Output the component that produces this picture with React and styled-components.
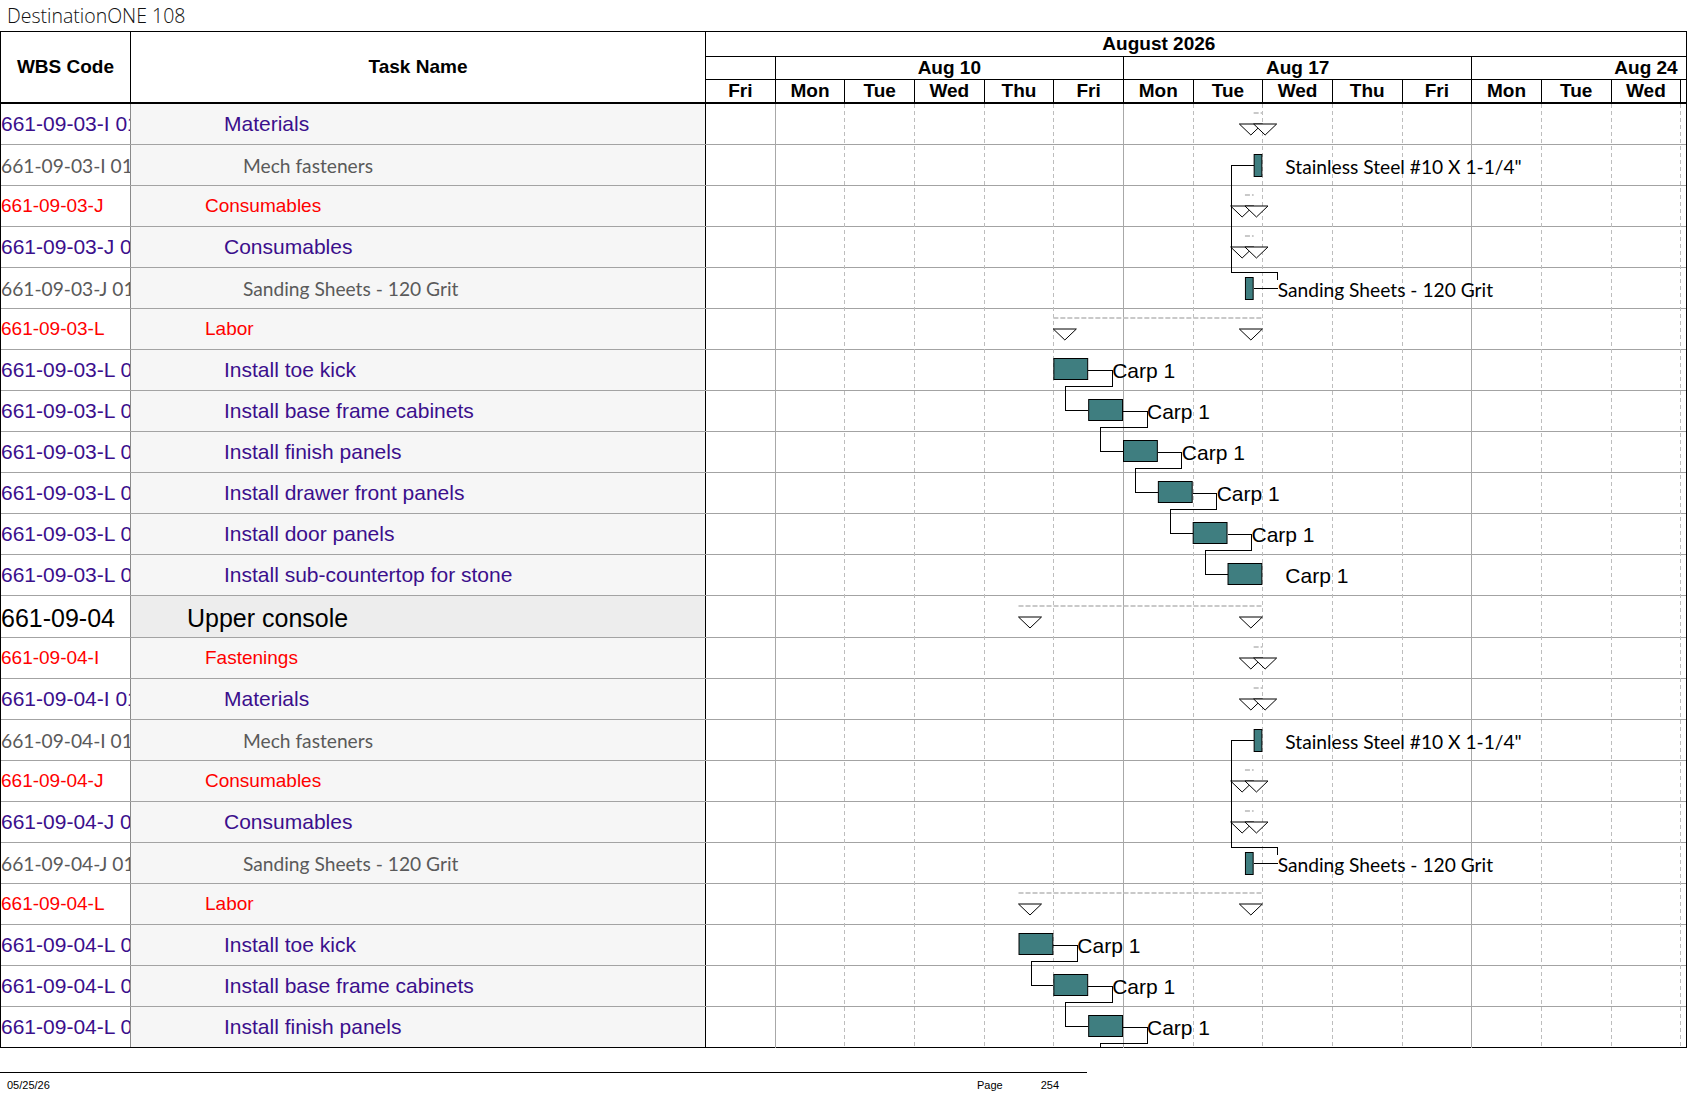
import React from "react";
import styled, { createGlobalStyle, css } from "styled-components";

// timescale: one working day = 69.67px, day 0 = Fri Aug 7 (starts at the task/chart divider)
const DAY = 69.67;
const X0 = 705;
const dx = (d) => X0 + DAY * d;

const BODY_TOP = 104;
const ROW_H = 41;
const BIG_ROW_H = 42;

const MAT = [7.875, 8];
const CON = [7.75, 7.875];
const STEEL = 'Stainless Steel #10 X 1-1/4"';
const SAND = "Sanding Sheets - 120 Grit";

const rows = [
  { code: "661-09-03-I 01", name: "Materials", kind: "l3", sum: MAT },
  { code: "661-09-03-I 01-01", name: "Mech fasteners", kind: "l4", bar: MAT, label: STEEL, mat: true },
  { code: "661-09-03-J", name: "Consumables", kind: "l2", sum: CON },
  { code: "661-09-03-J 01", name: "Consumables", kind: "l3", sum: CON },
  { code: "661-09-03-J 01-01", name: SAND, kind: "l4", bar: CON, label: SAND, mat: true, link: -3 },
  { code: "661-09-03-L", name: "Labor", kind: "l2", sum: [5, 8] },
  { code: "661-09-03-L 01", name: "Install toe kick", kind: "task", bar: [5, 5.5], label: "Carp 1", link: 1 },
  { code: "661-09-03-L 02", name: "Install base frame cabinets", kind: "task", bar: [5.5, 6], label: "Carp 1", link: 1 },
  { code: "661-09-03-L 03", name: "Install finish panels", kind: "task", bar: [6, 6.5], label: "Carp 1", link: 1 },
  { code: "661-09-03-L 04", name: "Install drawer front panels", kind: "task", bar: [6.5, 7], label: "Carp 1", link: 1 },
  { code: "661-09-03-L 05", name: "Install door panels", kind: "task", bar: [7, 7.5], label: "Carp 1", link: 1 },
  { code: "661-09-03-L 06", name: "Install sub-countertop for stone", kind: "task", bar: [7.5, 8], label: "Carp 1" },
  { code: "661-09-04", name: "Upper console", kind: "l1", sum: [4.5, 8] },
  { code: "661-09-04-I", name: "Fastenings", kind: "l2", sum: MAT },
  { code: "661-09-04-I 01", name: "Materials", kind: "l3", sum: MAT },
  { code: "661-09-04-I 01-01", name: "Mech fasteners", kind: "l4", bar: MAT, label: STEEL, mat: true },
  { code: "661-09-04-J", name: "Consumables", kind: "l2", sum: CON },
  { code: "661-09-04-J 01", name: "Consumables", kind: "l3", sum: CON },
  { code: "661-09-04-J 01-01", name: SAND, kind: "l4", bar: CON, label: SAND, mat: true, link: -3 },
  { code: "661-09-04-L", name: "Labor", kind: "l2", sum: [4.5, 8] },
  { code: "661-09-04-L 01", name: "Install toe kick", kind: "task", bar: [4.5, 5], label: "Carp 1", link: 1 },
  { code: "661-09-04-L 02", name: "Install base frame cabinets", kind: "task", bar: [5, 5.5], label: "Carp 1", link: 1 },
  { code: "661-09-04-L 03", name: "Install finish panels", kind: "task", bar: [5.5, 6], label: "Carp 1", link: 1 },
];

// row tops in page coordinates
let acc = BODY_TOP;
const layout = rows.map((r) => {
  const h = r.kind === "l1" ? BIG_ROW_H : ROW_H;
  const top = acc;
  acc += h;
  return { top, h };
});
const BODY_H = acc - BODY_TOP;

const days = ["Fri", "Mon", "Tue", "Wed", "Thu", "Fri", "Mon", "Tue", "Wed", "Thu", "Fri", "Mon", "Tue", "Wed"];
const weeks = [
  { w: DAY, text: "" },
  { w: DAY * 5, text: "Aug 10" },
  { w: DAY * 5, text: "Aug 17" },
  { w: DAY * 5, text: "Aug 24" },
];

const kindStyles = {
  l1: css`
    font-size: 25px;
    color: #000;
    padding-top: 4px;
  `,
  l2: css`
    font-size: 19px;
    color: #f00;
  `,
  l3: css`
    font-size: 21px;
    color: #3b0f8c;
  `,
  task: css`
    font-size: 21px;
    color: #3b0f8c;
  `,
  l4: css`
    font-family: Lato, "Liberation Sans", sans-serif;
    font-size: 19.2px;
    color: #5a5a5a;
  `,
};

const indents = { l1: 56, l2: 74, l3: 93, task: 93, l4: 112 };

const GlobalStyle = createGlobalStyle`
  html, body {
    margin: 0;
    padding: 0;
    background: #fff;
  }
  body {
    font-family: "Liberation Sans", Arial, sans-serif;
    color: #000;
  }
`;

const Page = styled.div`
  width: 1687px;
`;

const Title = styled.div`
  height: 31px;
  padding-left: 7px;
  display: flex;
  align-items: center;
  font-family: "Open Sans", sans-serif;
  font-weight: 300;
  font-size: 19.5px;
  color: #111;
`;

const Sheet = styled.div`
  border: 1px solid #000;
  border-bottom: none;
`;

const Header = styled.div`
  display: flex;
  height: 72px;
  box-sizing: border-box;
  border-bottom: 2px solid #000;
`;

const HeadCell = styled.div`
  flex: none;
  width: ${(p) => p.$w}px;
  box-sizing: border-box;
  border-right: 1px solid #000;
  display: flex;
  align-items: center;
  justify-content: center;
  font-weight: bold;
  font-size: 19px;
`;

const Timescale = styled.div`
  flex: 1;
  min-width: 0;
  display: flex;
  flex-direction: column;
`;

const ScaleRow = styled.div`
  display: flex;
  height: ${(p) => p.$h}px;
  box-sizing: border-box;
  border-bottom: ${(p) => (p.$last ? "none" : "1px solid #000")};
  overflow: hidden;
  flex: ${(p) => (p.$last ? 1 : "none")};
`;

const ScaleCell = styled.div`
  flex: none;
  width: ${(p) => p.$w}px;
  margin-left: ${(p) => p.$offset || 0}px;
  box-sizing: border-box;
  border-right: ${(p) => (p.$open ? "none" : "1px solid #000")};
  display: flex;
  align-items: center;
  justify-content: center;
  font-weight: bold;
  font-size: 19px;
  white-space: nowrap;
`;

const Body = styled.div`
  position: relative;
`;

const Row = styled.div`
  display: flex;
  height: ${(p) => p.$h}px;
  box-sizing: border-box;
  border-bottom: 1px solid #a3a3a3;

  &:last-of-type {
    border-bottom-color: #000;
  }
`;

const CodeCell = styled.div`
  flex: none;
  width: 130px;
  box-sizing: border-box;
  border-right: 1px solid #8a8a8a;
  display: flex;
  align-items: center;
  overflow: hidden;
  white-space: nowrap;
  background: #fff;
  ${(p) => kindStyles[p.$kind]}
`;

const NameCell = styled.div`
  flex: none;
  width: 575px;
  box-sizing: border-box;
  border-right: 1px solid #000;
  padding-left: ${(p) => p.$indent}px;
  display: flex;
  align-items: center;
  overflow: hidden;
  white-space: nowrap;
  background: ${(p) => (p.$kind === "l1" ? "#ededed" : "#f6f6f6")};
  ${(p) => kindStyles[p.$kind]}
`;

const ChartCell = styled.div`
  flex: 1;
`;

const ChartOverlay = styled.svg`
  position: absolute;
  left: 705px;
  top: 0;
  pointer-events: none;
  overflow: hidden;
`;

const Footer = styled.div`
  margin-top: 24px;
  width: 1087px;
  box-sizing: border-box;
  border-top: 1px solid #000;
  padding: 5px 28px 0 7px;
  display: flex;
  align-items: center;
  font-size: 11px;
  line-height: 14px;
`;

const FooterPage = styled.span`
  margin-left: auto;
  margin-right: 38px;
`;

function GridLines() {
  const lines = [];
  for (let k = 1; k <= 14; k++) {
    const x = Math.round(dx(k)) + 0.5;
    const week = k === 1 || k === 6 || k === 11;
    lines.push(
      <line
        key={k}
        x1={x}
        x2={x}
        y1={BODY_TOP}
        y2={BODY_TOP + BODY_H}
        stroke={week ? "#a8a8a8" : "#bdbdbd"}
        strokeWidth="1"
        strokeDasharray={week ? undefined : "4 3"}
      />
    );
  }
  return <g shapeRendering="crispEdges">{lines}</g>;
}

function Summary({ top, h, range }) {
  const s = dx(range[0]);
  const e = dx(range[1]);
  const ty = top + (h > ROW_H ? 21 : 20);
  const dashY = top + (h > ROW_H ? 10 : 9);
  return (
    <g>
      <line x1={s} x2={e} y1={dashY} y2={dashY} stroke="#c9c9c9" strokeWidth="2" strokeDasharray="5 2" />
      <path d={`M${e - 23},${ty} L${e},${ty} L${e - 11.5},${ty + 11} Z`} fill="#fff" stroke="#000" strokeWidth="1" />
      <path d={`M${s},${ty} L${s + 23},${ty} L${s + 11.5},${ty + 11} Z`} fill="#fff" stroke="#000" strokeWidth="1" />
    </g>
  );
}

function linkPath(i) {
  const r = rows[i];
  const { top, h } = layout[i];
  const s = dx(r.bar[0]);
  const e = dx(r.bar[1]);
  const cy = Math.round(top + 20) + 0.5;
  const lx = e + 24;
  const j = i + r.link;
  if (r.link > 0) {
    const next = rows[j];
    const nTop = next ? layout[j].top : top + h;
    const nCy = Math.round(nTop + 19) + 0.5;
    const ns = next ? dx(next.bar[0]) : s + DAY / 2;
    const endY = next ? nCy : nTop + 40;
    return `M${e},${cy} H${lx} V${top + h - 4.5} H${Math.round(s + 12) + 0.5} V${endY} ${next ? `H${ns}` : ""}`;
  }
  const t = layout[j];
  const tCy = Math.round(t.top + 20) + 0.5;
  return `M${e},${cy} H${lx} M${lx},${top + 12} V${top + 4.5} H${Math.round(s - 14) + 0.5} V${tCy} H${dx(rows[j].bar[0])}`;
}

function TaskBar({ i }) {
  const r = rows[i];
  const { top } = layout[i];
  const s = dx(r.bar[0]);
  const e = dx(r.bar[1]);
  const y = top + (r.mat ? 9 : 8);
  const bh = r.mat ? 23 : 22;
  const lx = e + (r.link ? 24 : 23);
  return (
    <g>
      {r.link && <path d={linkPath(i)} fill="none" stroke="#000" strokeWidth="1" shapeRendering="crispEdges" />}
      <rect x={s + 0.5} y={y + 0.5} width={e - s - 1} height={bh - 1} fill="#3f7e80" stroke="#000" strokeWidth="1" />
      <text
        x={lx}
        y={top + (r.mat ? 29 : 28)}
        fontFamily={r.mat ? "Lato, 'Liberation Sans', sans-serif" : "'Liberation Sans', Arial, sans-serif"}
        fontSize={r.mat ? 19.2 : 21}
        fill="#000"
      >
        {r.label}
      </text>
    </g>
  );
}

function Chart() {
  return (
    <ChartOverlay width={980} height={BODY_H} viewBox={`706 ${BODY_TOP} 980 ${BODY_H}`}>
      <GridLines />
      {rows.map((r, i) =>
        r.sum ? <Summary key={i} top={layout[i].top} h={layout[i].h} range={r.sum} /> : null
      )}
      {rows.map((r, i) => (r.bar ? <TaskBar key={i} i={i} /> : null))}
    </ChartOverlay>
  );
}

export default function App() {
  return (
    <Page>
      <GlobalStyle />
      <Title>DestinationONE 108</Title>
      <Sheet>
        <Header>
          <HeadCell $w={130}>WBS Code</HeadCell>
          <HeadCell $w={575}>Task Name</HeadCell>
          <Timescale>
            <ScaleRow $h={25}>
              <ScaleCell $w={DAY * 21} $offset={-DAY * 4} $open>
                August 2026
              </ScaleCell>
            </ScaleRow>
            <ScaleRow $h={23}>
              {weeks.map((wk, k) => (
                <ScaleCell key={k} $w={wk.w}>
                  {wk.text}
                </ScaleCell>
              ))}
            </ScaleRow>
            <ScaleRow $h={22} $last>
              {days.map((d, k) => (
                <ScaleCell key={k} $w={DAY}>
                  {d}
                </ScaleCell>
              ))}
            </ScaleRow>
          </Timescale>
        </Header>
        <Body>
          {rows.map((r, i) => (
            <Row key={i} $h={layout[i].h}>
              <CodeCell $kind={r.kind}>{r.code}</CodeCell>
              <NameCell $kind={r.kind} $indent={indents[r.kind]}>
                {r.name}
              </NameCell>
              <ChartCell />
            </Row>
          ))}
          <Chart />
        </Body>
      </Sheet>
      <Footer>
        <span>05/25/26</span>
        <FooterPage>Page</FooterPage>
        <span>254</span>
      </Footer>
    </Page>
  );
}
